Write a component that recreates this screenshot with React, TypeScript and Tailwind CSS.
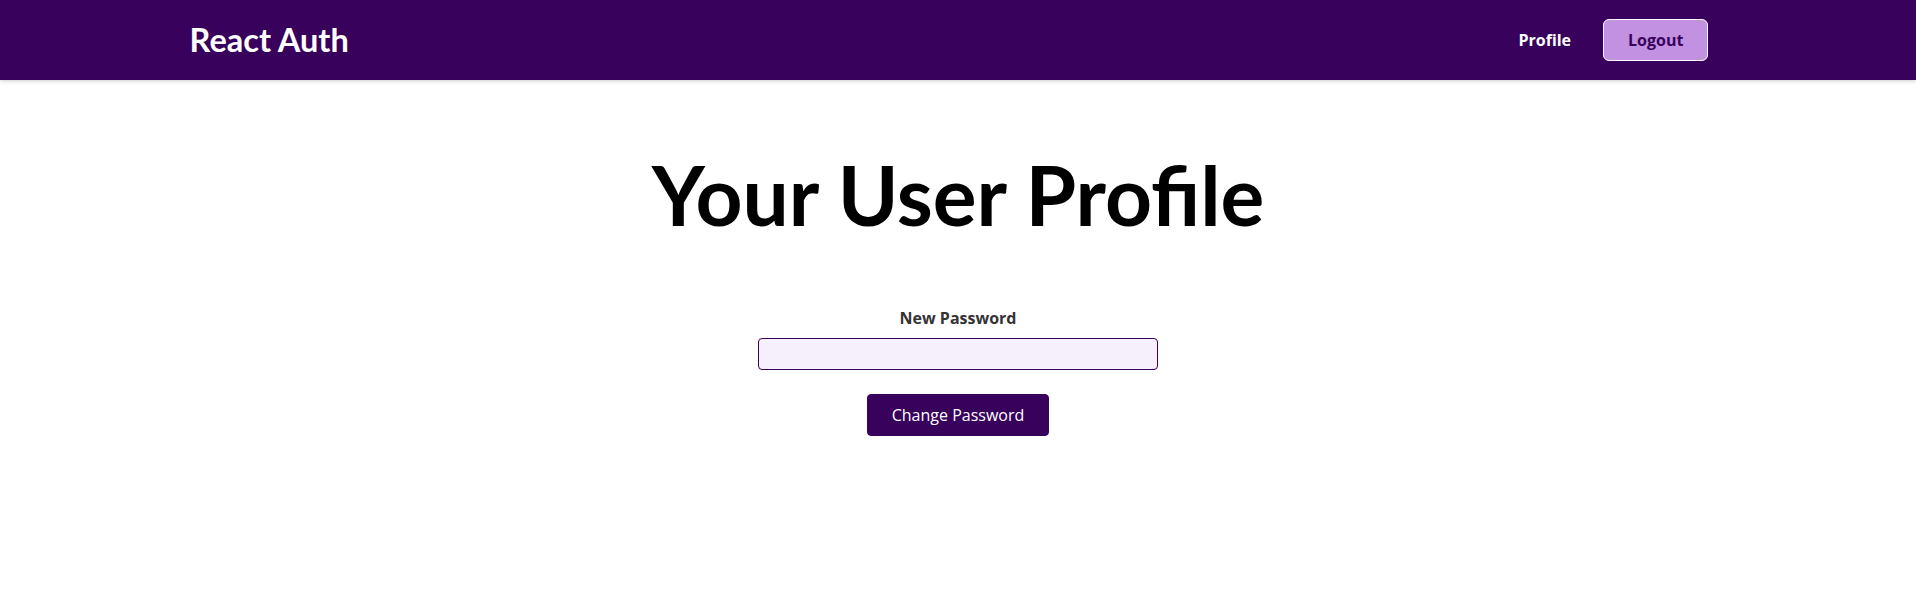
export default function App() {
  return (
    <div className="min-h-screen bg-white font-['Open_Sans',sans-serif] text-base">
      {/* header */}
      <header className="flex h-20 w-full items-center justify-between bg-[#38015c] px-[10%] shadow-[0_1px_4px_rgba(0,0,0,0.2)]">
        <div className="m-0 -ml-0.5 font-['Lato',sans-serif] text-[32.5px] leading-normal font-bold text-white">React Auth</div>
        <nav>
          <ul className="m-0 flex list-none items-baseline p-0">
            <li className="mx-4">
              <a href="#" className="font-bold text-white no-underline">Profile</a>
            </li>
            <li className="mx-4">
              <button className="cursor-pointer rounded-[6px] border border-white bg-[#c291e2] px-6 py-2 leading-normal font-bold text-[#38015c]">
                Logout
              </button>
            </li>
          </ul>
        </nav>
      </header>

      {/* profile */}
      <section className="mx-auto text-center">
        <h1 className="mt-[66px] font-['Lato',sans-serif] text-[82px] leading-[96px] font-bold text-black">Your User Profile</h1>
        <form className="mx-auto mt-[64px] w-[400px]">
          <div>
            <label htmlFor="new-password" className="mb-2 block leading-normal font-bold text-[#353336]">New Password</label>
            <input
              type="password"
              id="new-password"
              className="block h-8 w-full rounded border border-[#38015c] bg-[#f6effc] p-1 text-left text-[#38015c]"
            />
          </div>
          <div className="mt-6">
            <button className="cursor-pointer rounded border border-[#38015c] bg-[#38015c] px-6 py-2 leading-normal text-white">
              Change Password
            </button>
          </div>
        </form>
      </section>
    </div>
  );
}
